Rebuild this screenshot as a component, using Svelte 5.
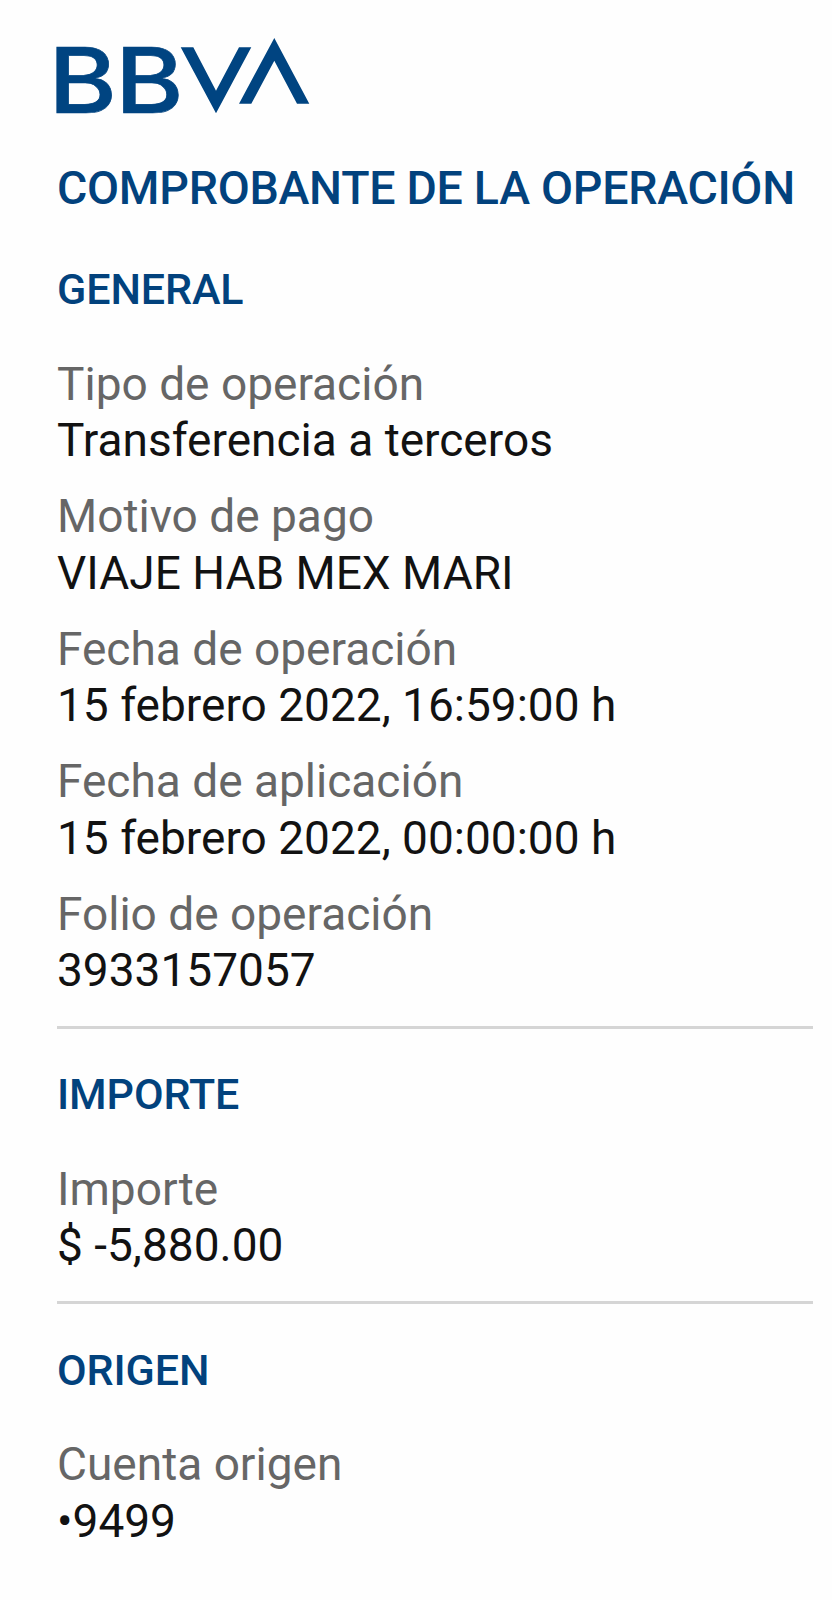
<script lang="ts">
  type Field = { label: string; value: string }
  type Section = { title: string; fields: Field[] }

  const sections: Section[] = [
    {
      title: 'GENERAL',
      fields: [
        { label: 'Tipo de operación', value: 'Transferencia a terceros' },
        { label: 'Motivo de pago', value: 'VIAJE HAB MEX MARI' },
        { label: 'Fecha de operación', value: '15 febrero 2022, 16:59:00 h' },
        { label: 'Fecha de aplicación', value: '15 febrero 2022, 00:00:00 h' },
        { label: 'Folio de operación', value: '3933157057' },
      ],
    },
    {
      title: 'IMPORTE',
      fields: [{ label: 'Importe', value: '$ -5,880.00' }],
    },
    {
      title: 'ORIGEN',
      fields: [{ label: 'Cuenta origen', value: '•9499' }],
    },
  ]
</script>

<main class="receipt">
  <svg class="logo" viewBox="0 0 253 76" role="img" aria-label="BBVA">
    <text class="logo-text" transform="translate(-8.4 75) scale(1.15 1)">B</text>
    <text class="logo-text" transform="translate(58.3 75) scale(1.15 1)">B</text>
    <!-- interlocking chevrons -->
    <path d="M123.7 9.3H136.3L159 52.7L182 9.3H194.3L159 75.3Z" />
    <path d="M217.3 0L252.3 65.7H240L217.3 22.7L194.3 65.7H182Z" />
  </svg>

  <h1>COMPROBANTE DE LA OPERACIÓN</h1>

  {#each sections as section}
    <section>
      <h2>{section.title}</h2>
      <dl>
        {#each section.fields as field}
          <div class="field">
            <dt>{field.label}</dt>
            <dd>{field.value}</dd>
          </div>
        {/each}
      </dl>
    </section>
  {/each}
</main>

<style>
  :global(body) {
    background: #fefefe;
  }
  .receipt {
    box-sizing: border-box;
    min-height: 1600px;
    padding: 38px 19px 0 57px;
    font-family: Roboto, 'Liberation Sans', sans-serif;
    white-space: nowrap;
  }
  .logo {
    display: block;
    width: 253px;
    height: 76px;
    fill: #004481;
    overflow: visible;
  }
  .logo-text {
    font-family: Inter, 'Liberation Sans', sans-serif;
    font-size: 90.4px;
    font-weight: 500;
    stroke: #004481;
    stroke-width: 0.7px;
  }
  h1,
  h2 {
    margin: 0;
    color: #02427d;
    font-weight: 500;
  }
  h1 {
    margin-top: 46px;
    margin-bottom: 48.2px;
    font-size: 46.5px;
    line-height: 56px;
    letter-spacing: -0.27px;
  }
  h2 {
    font-size: 43px;
    line-height: 50px;
    letter-spacing: -0.1px;
  }
  section + section {
    margin-top: 27.5px;
    padding-top: 40.1px;
    border-top: 3px solid #d5d5d5;
  }
  dl {
    display: flex;
    flex-direction: column;
    gap: 19.4px;
    margin: 41.8px 0 0;
    font-size: 46.02px;
    line-height: 56.5px;
  }
  dt {
    color: #666;
  }
  dd {
    margin: 0;
    color: #121212;
  }
</style>
